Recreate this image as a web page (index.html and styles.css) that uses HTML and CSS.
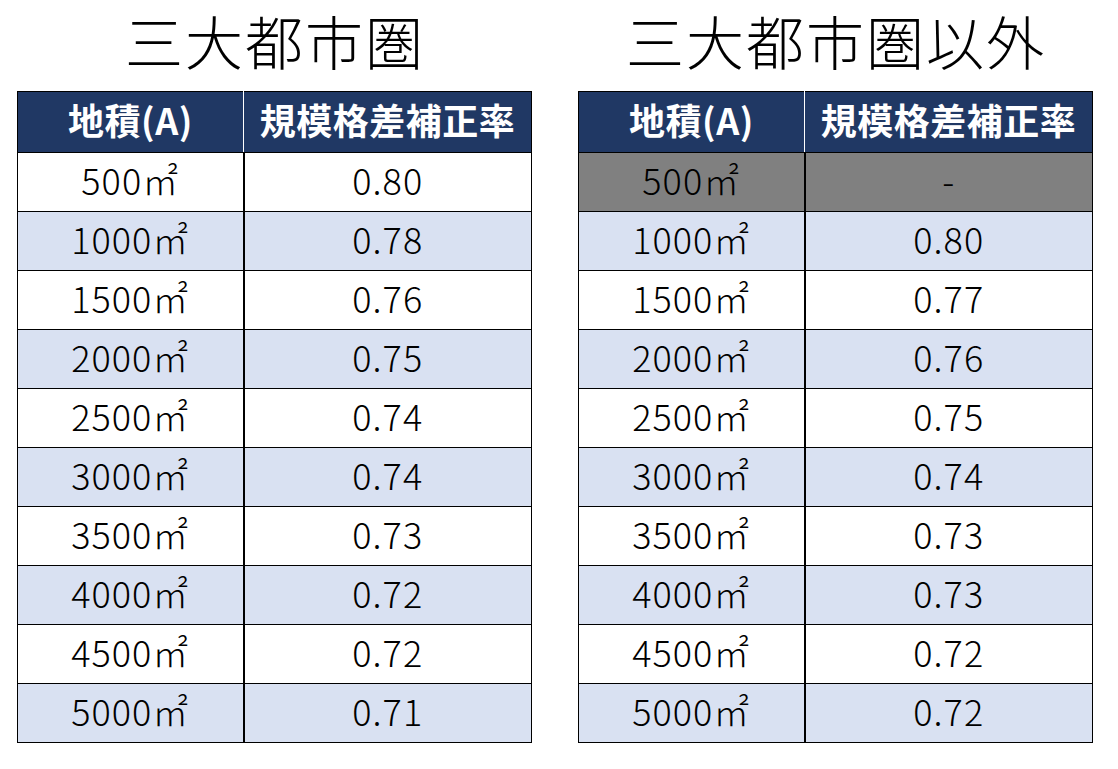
FILE: index.html
```html
<!DOCTYPE html>
<html lang="ja">
<head>
<meta charset="utf-8">
<link rel="stylesheet" href="styles.css">
</head>
<body>
<div class="page">
  <section class="panel">
    <h1 class="title">三大都市圏</h1>
    <table class="rate">
      <thead>
        <tr><th class="c1">地積(A)</th><th class="c2">規模格差補正率</th></tr>
      </thead>
      <tbody>
        <tr><td>500㎡</td><td>0.80</td></tr>
        <tr class="alt"><td>1000㎡</td><td>0.78</td></tr>
        <tr><td>1500㎡</td><td>0.76</td></tr>
        <tr class="alt"><td>2000㎡</td><td>0.75</td></tr>
        <tr><td>2500㎡</td><td>0.74</td></tr>
        <tr class="alt"><td>3000㎡</td><td>0.74</td></tr>
        <tr><td>3500㎡</td><td>0.73</td></tr>
        <tr class="alt"><td>4000㎡</td><td>0.72</td></tr>
        <tr><td>4500㎡</td><td>0.72</td></tr>
        <tr class="alt"><td>5000㎡</td><td>0.71</td></tr>
      </tbody>
    </table>
  </section>
  <section class="panel">
    <h1 class="title">三大都市圏以外</h1>
    <table class="rate">
      <thead>
        <tr><th class="c1">地積(A)</th><th class="c2">規模格差補正率</th></tr>
      </thead>
      <tbody>
        <tr class="na"><td>500㎡</td><td>-</td></tr>
        <tr class="alt"><td>1000㎡</td><td>0.80</td></tr>
        <tr><td>1500㎡</td><td>0.77</td></tr>
        <tr class="alt"><td>2000㎡</td><td>0.76</td></tr>
        <tr><td>2500㎡</td><td>0.75</td></tr>
        <tr class="alt"><td>3000㎡</td><td>0.74</td></tr>
        <tr><td>3500㎡</td><td>0.73</td></tr>
        <tr class="alt"><td>4000㎡</td><td>0.73</td></tr>
        <tr><td>4500㎡</td><td>0.72</td></tr>
        <tr class="alt"><td>5000㎡</td><td>0.72</td></tr>
      </tbody>
    </table>
  </section>
</div>
</body>
</html>
```

FILE: styles.css
```css
html, body {
  margin: 0;
  padding: 0;
  background: #ffffff;
}

body {
  font-family: "Noto Sans CJK JP", "Noto Sans", sans-serif;
  color: #000000;
}

.page {
  display: flex;
  gap: 47px;
  padding-left: 17px;
}

.panel {
  width: 514px;
  display: flex;
  flex-direction: column;
}

.title {
  margin: 0;
  height: 91px;
  line-height: 80px;
  font-size: 58px;
  font-weight: 300;
  text-align: center;
  letter-spacing: 2px;
  text-indent: 2px;
}

.rate {
  border-collapse: collapse;
  table-layout: fixed;
  width: 515px;
}

.rate th,
.rate td {
  padding: 0;
  text-align: center;
  border: 1px solid #000000;
  white-space: nowrap;
}

.rate th {
  background: #203864;
  color: #ffffff;
  font-size: 36px;
  font-weight: 700;
  height: 61px;
  line-height: 54px;
  padding-bottom: 6px;
  box-sizing: border-box;
  letter-spacing: 0.5px;
}

.rate th.c1 {
  width: 226px;
  border-right: 1px solid #ffffff;
}

.rate td {
  font-size: 36px;
  font-weight: 300;
  height: 59px;
  line-height: 52px;
  padding-bottom: 6px;
  box-sizing: border-box;
  letter-spacing: 1px;
  background: #ffffff;
}

.rate tr.alt td {
  background: #d9e1f2;
}

.rate tr.na td {
  background: #808080;
}

.rate td + td {
  border-left-width: 2px;
}
```
